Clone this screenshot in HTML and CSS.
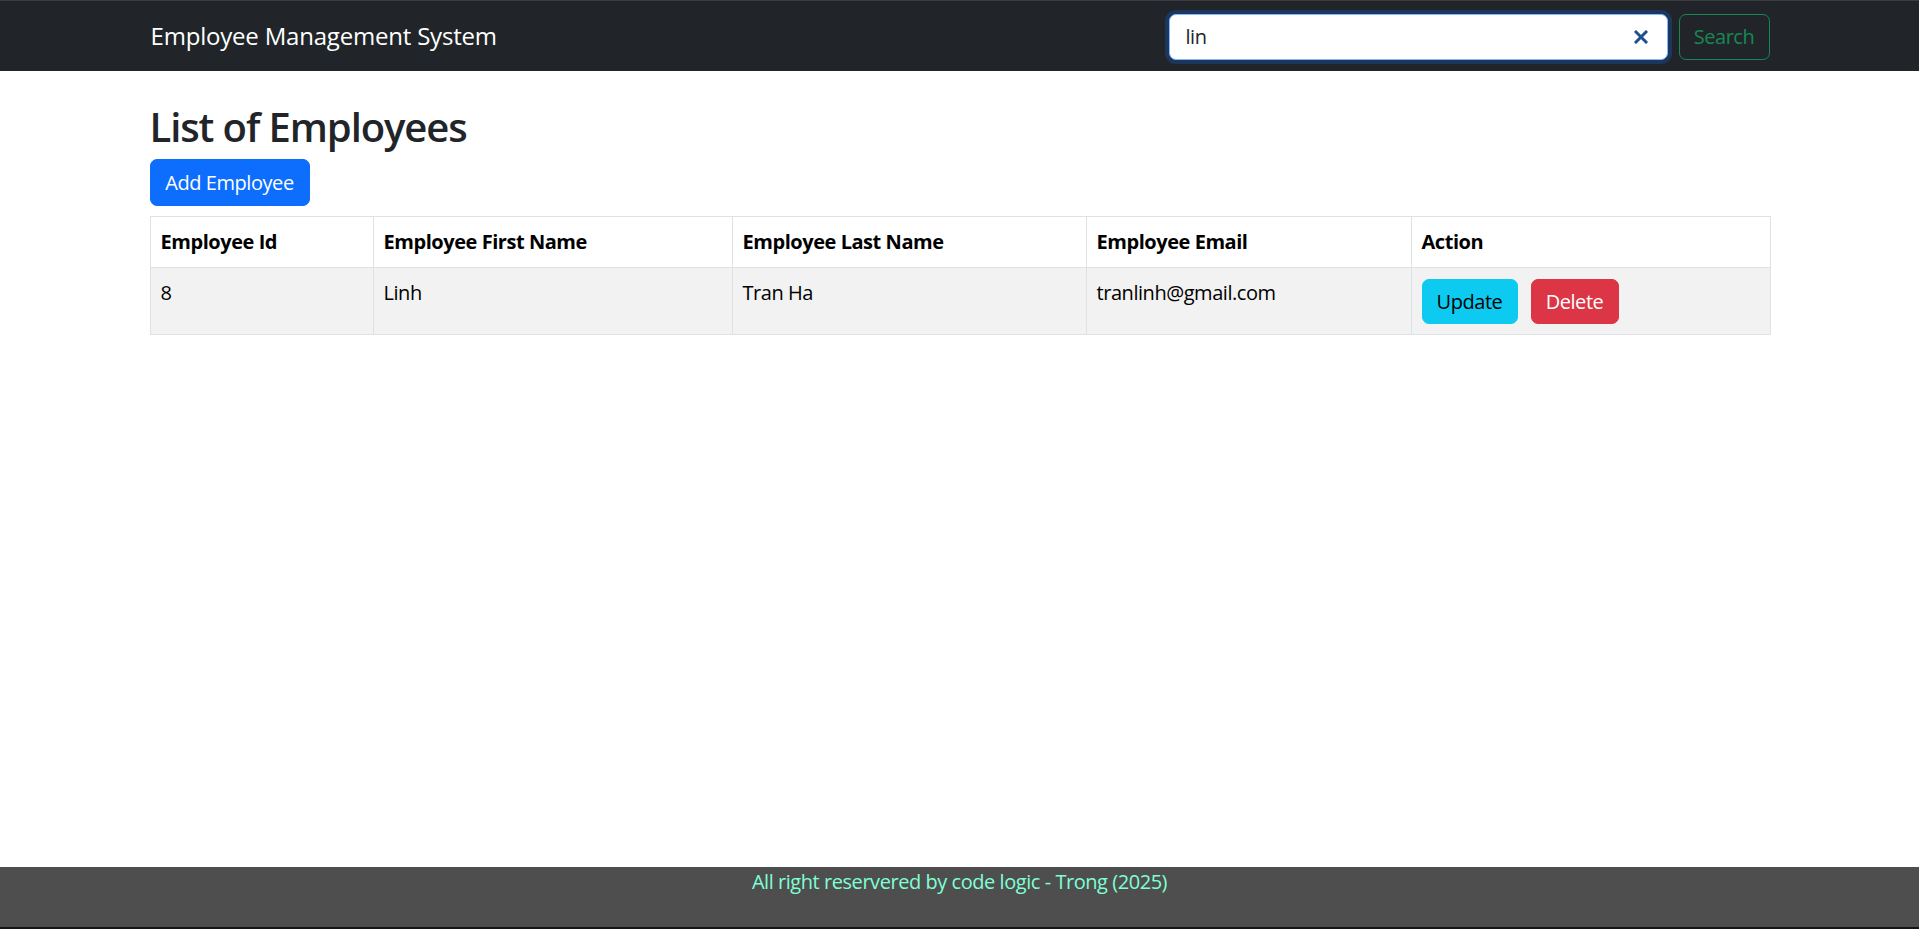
FILE: index.html
```html
<!DOCTYPE html>
<html lang="en">
<head>
<meta charset="utf-8">
<title>Employee Management System</title>
<link rel="stylesheet" href="styles.css">
</head>
<body>
<header class="navbar">
  <div class="container nav-inner">
    <a class="brand" href="#">Employee Management System</a>
    <form class="search-form">
      <div class="search-box">
        <input class="search-input" type="text" value="lin" aria-label="Search">
        <svg class="clear-icon" viewBox="0 0 14 14" width="14" height="14" aria-hidden="true">
          <path d="M2 2 L12 12 M12 2 L2 12" stroke="#1e4f8f" stroke-width="3" stroke-linecap="square"/>
        </svg>
      </div>
      <button class="btn btn-search" type="button">Search</button>
    </form>
  </div>
</header>

<main class="container main">
  <h2 class="title">List of Employees</h2>
  <div class="toolbar">
    <button class="btn btn-primary" type="button">Add Employee</button>
  </div>
  <table class="emp-table">
    <colgroup>
      <col class="c-id"><col class="c-first"><col class="c-last"><col class="c-email"><col class="c-action">
    </colgroup>
    <thead>
      <tr>
        <th>Employee Id</th>
        <th>Employee First Name</th>
        <th>Employee Last Name</th>
        <th>Employee Email</th>
        <th>Action</th>
      </tr>
    </thead>
    <tbody>
      <tr>
        <td>8</td>
        <td>Linh</td>
        <td>Tran Ha</td>
        <td>tranlinh@gmail.com</td>
        <td class="actions">
          <button class="btn btn-info" type="button">Update</button>
          <button class="btn btn-danger" type="button">Delete</button>
        </td>
      </tr>
    </tbody>
  </table>
</main>

<footer class="footer">
  <span class="footer-text">All right reservered by code logic - Trong (2025)</span>
</footer>
</body>
</html>
```

FILE: styles.css
```css
* { box-sizing: border-box; }

html, body { height: 100%; }

body {
  margin: 0;
  font-family: "Open Sans", "Noto Sans", "Liberation Sans", sans-serif;
  font-size: 20px;
  line-height: 1.5;
  letter-spacing: -0.45px;
  color: #212529;
  background: #ffffff;
  display: flex;
  flex-direction: column;
}

.container {
  width: 1620px;
  margin: 0 auto;
}

/* Navbar */
.navbar {
  background: #212529;
  border-top: 1px solid #3a3c3f;
  height: 71px;
  flex: none;
}

.nav-inner {
  height: 100%;
  display: flex;
  align-items: center;
  justify-content: space-between;
}

.brand {
  color: #ffffff;
  text-decoration: none;
  font-size: 24px;
  line-height: 30px;
  letter-spacing: -0.2px;
  margin-left: 1px;
}

.search-form {
  display: flex;
  align-items: center;
  gap: 11px;
  margin-top: 1px;
}

.search-box {
  width: 499px;
  height: 46px;
  background: #ffffff;
  border: 1px solid #86b7fe;
  border-radius: 7px;
  box-shadow: 0 0 0 4px #1c375e;
  display: flex;
  align-items: center;
  padding: 0 19px 0 16px;
}

.search-input {
  flex: 1;
  border: 0;
  outline: none;
  background: transparent;
  font: inherit;
  letter-spacing: inherit;
  color: #212529;
  padding: 0;
  min-width: 0;
}

.clear-icon { flex: none; }

/* Buttons */
.btn {
  display: inline-block;
  font: inherit;
  font-size: 20px;
  line-height: 30px;
  letter-spacing: inherit;
  padding: 7px 15px;
  border: 1px solid transparent;
  border-radius: 7px;
  cursor: pointer;
  white-space: nowrap;
}

.btn-search {
  height: 46px;
  width: 91px;
  padding: 0;
  background: transparent;
  border-color: #198754;
  color: #198754;
}

.btn-primary {
  background: #0d6efd;
  border-color: #0d6efd;
  color: #ffffff;
  height: 47px;
  width: 160px;
  padding: 0;
}

.btn-info {
  background: #0dcaf0;
  border-color: #0dcaf0;
  color: #000000;
  width: 96px;
  height: 45px;
  padding: 0;
}

.btn-danger {
  background: #dc3545;
  border-color: #dc3545;
  color: #ffffff;
  width: 88px;
  height: 45px;
  padding: 0;
  margin-left: 13px;
}

/* Main */
.main {
  flex: 1;
}

.title {
  font-size: 40px;
  font-weight: 600;
  line-height: 48px;
  letter-spacing: -1.1px;
  margin: 32px 0 8px;
  color: #212529;
}

.toolbar {
  margin-bottom: 10px;
}

.emp-table {
  width: 100%;
  border-collapse: collapse;
  table-layout: fixed;
  color: #000000;
  border: 1px solid #dee2e6;
}

.c-id { width: 223px; }
.c-first { width: 359px; }
.c-last { width: 354px; }
.c-email { width: 325px; }
.c-action { width: 359px; }

.emp-table th,
.emp-table td {
  border: 1px solid #dee2e6;
  padding: 10px;
  text-align: left;
  vertical-align: top;
}

.emp-table th {
  font-weight: 700;
  background: #ffffff;
}

.emp-table tbody tr {
  background: #f2f2f2;
}

.emp-table td.actions {
  padding-top: 11px;
  padding-bottom: 10px;
  font-size: 0;
}

/* Footer */
.footer {
  flex: none;
  height: 62px;
  background: #4e4e4e;
  border-bottom: 2px solid #151515;
  text-align: center;
}

.footer-text {
  color: #7fffd4;
  font-size: 20px;
  line-height: 30px;
}
```
